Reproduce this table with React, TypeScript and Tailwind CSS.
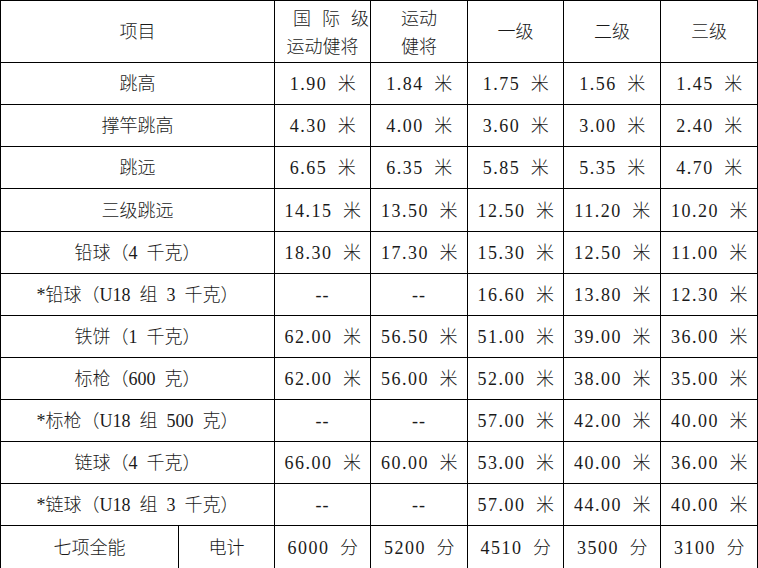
import React from 'react';

const rows: string[][] = [
  ['跳高', '1.90 米', '1.84 米', '1.75 米', '1.56 米', '1.45 米'],
  ['撑竿跳高', '4.30 米', '4.00 米', '3.60 米', '3.00 米', '2.40 米'],
  ['跳远', '6.65 米', '6.35 米', '5.85 米', '5.35 米', '4.70 米'],
  ['三级跳远', '14.15 米', '13.50 米', '12.50 米', '11.20 米', '10.20 米'],
  ['铅球（4 千克）', '18.30 米', '17.30 米', '15.30 米', '12.50 米', '11.00 米'],
  ['*铅球（U18 组 3 千克）', '--', '--', '16.60 米', '13.80 米', '12.30 米'],
  ['铁饼（1 千克）', '62.00 米', '56.50 米', '51.00 米', '39.00 米', '36.00 米'],
  ['标枪（600 克）', '62.00 米', '56.00 米', '52.00 米', '38.00 米', '35.00 米'],
  ['*标枪（U18 组 500 克）', '--', '--', '57.00 米', '42.00 米', '40.00 米'],
  ['链球（4 千克）', '66.00 米', '60.00 米', '53.00 米', '40.00 米', '36.00 米'],
  ['*链球（U18 组 3 千克）', '--', '--', '57.00 米', '44.00 米', '40.00 米'],
];

const cell = 'border border-black text-center align-middle p-0 pt-[2px]';
const num = `${cell} tracking-[1.5px] pl-[2px]`;

export default function App() {
  return (
    <div className="w-[758px] h-[568px] overflow-hidden bg-white">
      <table
        className="table-fixed border-collapse w-[758px] text-[18px] text-[#1a1a1a] font-light [word-spacing:4.5px]"
        style={{ fontFamily: '"Liberation Serif", "Noto Sans CJK SC", serif' }}
      >
        <colgroup>
          <col className="w-[178px]" />
          <col className="w-[96px]" />
          <col className="w-[96px]" />
          <col className="w-[97px]" />
          <col className="w-[96px]" />
          <col className="w-[97px]" />
          <col className="w-[97px]" />
        </colgroup>
        <tbody>
          <tr className="h-[62px]">
            <td colSpan={2} className={cell}>项目</td>
            <td className={cell}>
              <div className="leading-[28px]">
                <div className="flex justify-between pl-[18px] pr-[1px]">
                  <span>国</span><span>际</span><span>级</span>
                </div>
                <div>运动健将</div>
              </div>
            </td>
            <td className={cell}>
              <div className="leading-[28px]">
                <div>运动</div>
                <div>健将</div>
              </div>
            </td>
            <td className={cell}>一级</td>
            <td className={cell}>二级</td>
            <td className={cell}>三级</td>
          </tr>
          {rows.map((r, i) => (
            <tr key={i} className={i === 3 ? 'h-[43px]' : 'h-[42px]'}>
              <td colSpan={2} className={cell}>{r[0]}</td>
              {r.slice(1).map((v, j) => (
                <td key={j} className={v === '--' ? `${cell} tracking-[1px]` : num}>{v}</td>
              ))}
            </tr>
          ))}
          <tr className="h-[44px]">
            <td className={cell}>七项全能</td>
            <td className={cell}>电计</td>
            <td className={num}>6000 分</td>
            <td className={num}>5200 分</td>
            <td className={num}>4510 分</td>
            <td className={num}>3500 分</td>
            <td className={num}>3100 分</td>
          </tr>
        </tbody>
      </table>
    </div>
  );
}
